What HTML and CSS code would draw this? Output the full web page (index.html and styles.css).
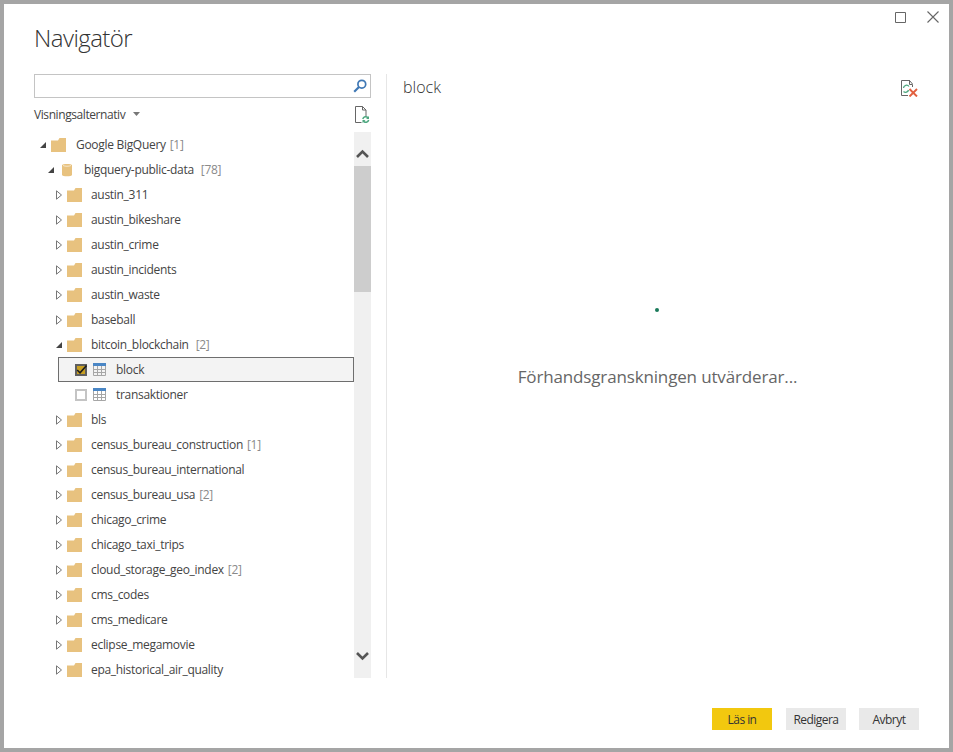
FILE: index.html
```html
<!DOCTYPE html>
<html lang="sv">
<head>
<meta charset="UTF-8">
<meta name="viewport" content="width=device-width, initial-scale=1.0">
<title>Navigatör</title>
<link rel="stylesheet" href="styles.css">
</head>
<body>
  <svg class="sprites" width="0" height="0">
    <symbol id="folder" viewBox="0 0 15 14"><path d="M0 2.5H7L8.5 0H15V14H0Z" fill="#e8c27f"/></symbol>
    <symbol id="open" viewBox="0 0 8 8"><path d="M7 1V7H1Z" fill="#444"/></symbol>
    <symbol id="closed" viewBox="0 0 8 10"><path d="M1.5 .8L6.5 5L1.5 9.2Z" fill="#fff" stroke="#777"/></symbol>
    <symbol id="grid" viewBox="0 0 13 13">
      <path d="M0 0H13V3H0Z" fill="#4a86c5"/>
      <path d="M.5 3V12.5H12.5V3M4.5 3V12.5M8.5 3V12.5M.5 6.5H12.5M.5 9.5H12.5" fill="none" stroke="#a6a6a6"/>
    </symbol>
  </svg>

  <div class="window">
    <header class="topbar">
      <h1>Navigatör</h1>
      <div class="window-btns">
        <svg width="11" height="11" viewBox="0 0 11 11"><path d="M.5 .5H10.5V10.5H.5Z" fill="none" stroke="#666"/></svg>
        <svg width="12" height="12" viewBox="0 0 12 12"><path d="M.5 .5L11.5 11.5M11.5 .5L.5 11.5" stroke="#666" stroke-width="1.1"/></svg>
      </div>
    </header>

    <main class="panes">
      <section class="left-pane">
        <div class="search">
          <svg width="14" height="14" viewBox="0 0 14 14"><circle cx="8.8" cy="5.2" r="3.9" fill="none" stroke="#3f78b5" stroke-width="1.7"/><path d="M6 8L1.2 12.8" stroke="#3f78b5" stroke-width="2.2"/></svg>
        </div>
        <div class="options">
          <span>Visningsalternativ</span>
          <svg class="caret" width="7" height="4" viewBox="0 0 7 4"><path d="M0 0H7L3.5 4Z" fill="#777"/></svg>
          <svg class="page-refresh" width="16" height="17" viewBox="0 0 16 17">
            <path d="M7.500 16.500H1.500V.5H8.500L12 4V10M8.500 .5V4H12" fill="none" stroke="#666"/>
            <path d="M8.800 13A3 3 0 0 1 14 11.800M14.700 14A3 3 0 0 1 9.500 15.200" fill="none" stroke="#4da77f" stroke-width="1.500"/>
            <path d="M15 10V13H12ZM8.500 17V14H11.500Z" fill="#4da77f"/>
          </svg>
        </div>
        <div class="tree-wrap">
          <ul class="tree">
            <li class="row lvl0"><svg class="arrow"><use href="#open"/></svg><svg class="folder"><use href="#folder"/></svg><span>Google BigQuery</span><em>[1]</em></li>
            <li class="row lvl1">
              <svg class="arrow"><use href="#open"/></svg>
              <svg class="db" width="10" height="14" viewBox="0 0 10 14"><path d="M0 2C0 .5 10 .5 10 2V12C10 13.800 0 13.800 0 12Z" fill="#e8c27f"/><path d="M1 2.500C3 3.500 7 3.500 9 2.500" fill="none" stroke="#fff" stroke-width=".6"/></svg>
              <span>bigquery-public-data</span><em class="wide">[78]</em>
            </li>
            <li class="row lvl2"><svg class="arrow shut"><use href="#closed"/></svg><svg class="folder"><use href="#folder"/></svg><span>austin_311</span></li>
            <li class="row lvl2"><svg class="arrow shut"><use href="#closed"/></svg><svg class="folder"><use href="#folder"/></svg><span>austin_bikeshare</span></li>
            <li class="row lvl2"><svg class="arrow shut"><use href="#closed"/></svg><svg class="folder"><use href="#folder"/></svg><span>austin_crime</span></li>
            <li class="row lvl2"><svg class="arrow shut"><use href="#closed"/></svg><svg class="folder"><use href="#folder"/></svg><span>austin_incidents</span></li>
            <li class="row lvl2"><svg class="arrow shut"><use href="#closed"/></svg><svg class="folder"><use href="#folder"/></svg><span>austin_waste</span></li>
            <li class="row lvl2"><svg class="arrow shut"><use href="#closed"/></svg><svg class="folder"><use href="#folder"/></svg><span>baseball</span></li>
            <li class="row lvl2"><svg class="arrow"><use href="#open"/></svg><svg class="folder"><use href="#folder"/></svg><span>bitcoin_blockchain</span><em class="wide">[2]</em></li>
            <li class="row lvl3 selected">
              <svg class="check" width="12" height="12" viewBox="0 0 12 12"><path d="M0 0H12V12H0Z" fill="#5f5f5f"/><path d="M2 2H10V10H2Z" fill="#c9a021"/><path d="M2.200 6L5 8.800L11.500 1.500" fill="none" stroke="#1c1c1c" stroke-width="1.600"/></svg>
              <svg class="table"><use href="#grid"/></svg><span>block</span>
            </li>
            <li class="row lvl3">
              <svg class="check" width="12" height="12" viewBox="0 0 12 12"><path d="M1 1H11V11H1Z" fill="#fff" stroke="#c4c4c4" stroke-width="2"/></svg>
              <svg class="table"><use href="#grid"/></svg><span>transaktioner</span>
            </li>
            <li class="row lvl2"><svg class="arrow shut"><use href="#closed"/></svg><svg class="folder"><use href="#folder"/></svg><span>bls</span></li>
            <li class="row lvl2"><svg class="arrow shut"><use href="#closed"/></svg><svg class="folder"><use href="#folder"/></svg><span>census_bureau_construction</span><em>[1]</em></li>
            <li class="row lvl2"><svg class="arrow shut"><use href="#closed"/></svg><svg class="folder"><use href="#folder"/></svg><span>census_bureau_international</span></li>
            <li class="row lvl2"><svg class="arrow shut"><use href="#closed"/></svg><svg class="folder"><use href="#folder"/></svg><span>census_bureau_usa</span><em>[2]</em></li>
            <li class="row lvl2"><svg class="arrow shut"><use href="#closed"/></svg><svg class="folder"><use href="#folder"/></svg><span>chicago_crime</span></li>
            <li class="row lvl2"><svg class="arrow shut"><use href="#closed"/></svg><svg class="folder"><use href="#folder"/></svg><span>chicago_taxi_trips</span></li>
            <li class="row lvl2"><svg class="arrow shut"><use href="#closed"/></svg><svg class="folder"><use href="#folder"/></svg><span>cloud_storage_geo_index</span><em>[2]</em></li>
            <li class="row lvl2"><svg class="arrow shut"><use href="#closed"/></svg><svg class="folder"><use href="#folder"/></svg><span>cms_codes</span></li>
            <li class="row lvl2"><svg class="arrow shut"><use href="#closed"/></svg><svg class="folder"><use href="#folder"/></svg><span>cms_medicare</span></li>
            <li class="row lvl2"><svg class="arrow shut"><use href="#closed"/></svg><svg class="folder"><use href="#folder"/></svg><span>eclipse_megamovie</span></li>
            <li class="row lvl2"><svg class="arrow shut"><use href="#closed"/></svg><svg class="folder"><use href="#folder"/></svg><span>epa_historical_air_quality</span></li>
          </ul>
          <div class="scrollbar">
            <svg width="13" height="9" viewBox="0 0 13 9"><path d="M1 8L6.500 2.500L12 8" fill="none" stroke="#555" stroke-width="2.600"/></svg>
            <div class="thumb"></div>
            <svg class="down" width="13" height="9" viewBox="0 0 13 9"><path d="M1 1L6.500 6.500L12 1" fill="none" stroke="#555" stroke-width="2.600"/></svg>
          </div>
        </div>
      </section>

      <section class="right-pane">
        <div class="preview-head">
          <h2>block</h2>
          <svg width="18" height="17" viewBox="0 0 18 17">
            <path d="M10 .5H1.500V15.500H8M9.500 .5V4.500H12.500V7M9.500 .5L12.500 4" fill="none" stroke="#666"/>
            <path d="M3.500 8A3 3 0 0 1 9 6.500M8.500 10A3 3 0 0 1 3.500 11.500" fill="none" stroke="#4da77f" stroke-width="1.300"/>
            <path d="M9.500 9L17 16.500M17 9L9.500 16.500" stroke="#e2603f" stroke-width="1.900"/>
          </svg>
        </div>
        <div class="spinner"></div>
        <p class="status">Förhandsgranskningen utvärderar...</p>
      </section>
    </main>

    <footer class="actions">
      <button class="primary" type="button">Läs in</button>
      <button type="button">Redigera</button>
      <button type="button">Avbryt</button>
    </footer>
  </div>
</body>
</html>
```

FILE: styles.css
```css
* {
  box-sizing: border-box;
}

body {
  margin: 0;
  font-family: "Open Sans", "Noto Sans", Arial, sans-serif;
  font-size: 12px;
  color: #444444;
  background-color: #ffffff;
}

.sprites {
  display: block;
  height: 0;
}

.window {
  width: 953px;
  height: 752px;
  border: 4px solid #a5a5a5;
  display: flex;
  flex-direction: column;
  overflow: hidden;
}

.topbar {
  height: 70px;
  padding: 7px 10px 0 30px;
  display: flex;
  justify-content: space-between;
  align-items: flex-start;
}

.topbar h1 {
  margin: 9px 0 0;
  font-size: 24px;
  font-weight: 300;
  line-height: 36px;
  letter-spacing: -0.55px;
  color: #333333;
}

.window-btns {
  display: flex;
  gap: 21px;
  align-items: center;
}

.window-btns svg {
  display: block;
}

.panes {
  height: 604px;
  display: flex;
}

.left-pane {
  width: 337px;
  margin-left: 30px;
}

.search {
  height: 24px;
  border: 1px solid #c4c4c4;
  padding-right: 3px;
  display: flex;
  justify-content: flex-end;
  align-items: center;
}

.options {
  height: 34px;
  padding-bottom: 2px;
  display: flex;
  align-items: center;
  letter-spacing: -0.42px;
}

.caret {
  margin-left: 8px;
}

.page-refresh {
  margin-left: auto;
  margin-right: 1px;
}

.tree-wrap {
  height: 546px;
  display: flex;
  overflow: hidden;
}

.tree {
  flex: 1;
  margin: 0;
  padding: 0;
  list-style: none;
}

.row {
  height: 25px;
  display: flex;
  align-items: center;
  white-space: nowrap;
  letter-spacing: -0.3px;
}

.row em {
  margin-left: 4px;
  font-style: normal;
  color: #8a8a8a;
}

.row em.wide {
  margin-left: 7px;
}

.arrow {
  width: 8px;
  height: 8px;
  flex: none;
}

.arrow.shut {
  width: 8px;
  height: 10px;
}

.folder {
  width: 15px;
  height: 14px;
  flex: none;
}

.lvl0 {
  padding-left: 5px;
}

.lvl0 .folder {
  margin-left: 4px;
  margin-right: 10px;
}

.lvl1 {
  padding-left: 13px;
}

.lvl1 .db {
  margin-left: 7px;
  margin-right: 12px;
}

.lvl2 {
  padding-left: 21px;
}

.lvl2 .folder {
  margin-left: 4px;
  margin-right: 9px;
}

.lvl3 {
  padding-left: 41px;
}

.lvl3 .table {
  width: 13px;
  height: 13px;
  margin-left: 6px;
  margin-right: 10px;
}

.row.selected {
  margin-left: 24px;
  padding-left: 16px;
  background-color: #f3f3f3;
  border: 1px solid #6e6e6e;
}

.scrollbar {
  width: 17px;
  flex: none;
  background-color: #f0f0f0;
  display: flex;
  flex-direction: column;
  align-items: center;
  padding-top: 17px;
}

.thumb {
  width: 17px;
  height: 126px;
  margin-top: 8px;
  background-color: #cdcdcd;
}

.down {
  margin-top: 360px;
}

.right-pane {
  flex: 1;
  margin-left: 15px;
  border-left: 1px solid #e6e6e6;
  padding-left: 16px;
  padding-right: 31px;
  display: flex;
  flex-direction: column;
}

.preview-head {
  height: 28px;
  display: flex;
  justify-content: space-between;
  align-items: center;
}

.preview-head h2 {
  margin: -2px 0 0;
  font-size: 16px;
  font-weight: 300;
  color: #333333;
}

.spinner {
  width: 4px;
  height: 4px;
  margin: 206px 0 0 252px;
  background-color: #1a7a5a;
  border-radius: 50%;
}

.status {
  margin: 53px 0 0;
  padding-right: 6px;
  font-size: 17px;
  letter-spacing: -0.15px;
  color: #666666;
  text-align: center;
}

.actions {
  flex: 1;
  display: flex;
  justify-content: flex-end;
  align-items: flex-start;
  gap: 13px;
  padding: 30px 30px 0 0;
}

.actions button {
  width: 60px;
  height: 22px;
  padding: 0;
  border: none;
  background-color: #e9e9e9;
  color: #333333;
  font-family: inherit;
  font-size: 12px;
  letter-spacing: -0.55px;
}

.actions button.primary {
  background-color: #f2c80f;
  margin-right: 1px;
}
```
